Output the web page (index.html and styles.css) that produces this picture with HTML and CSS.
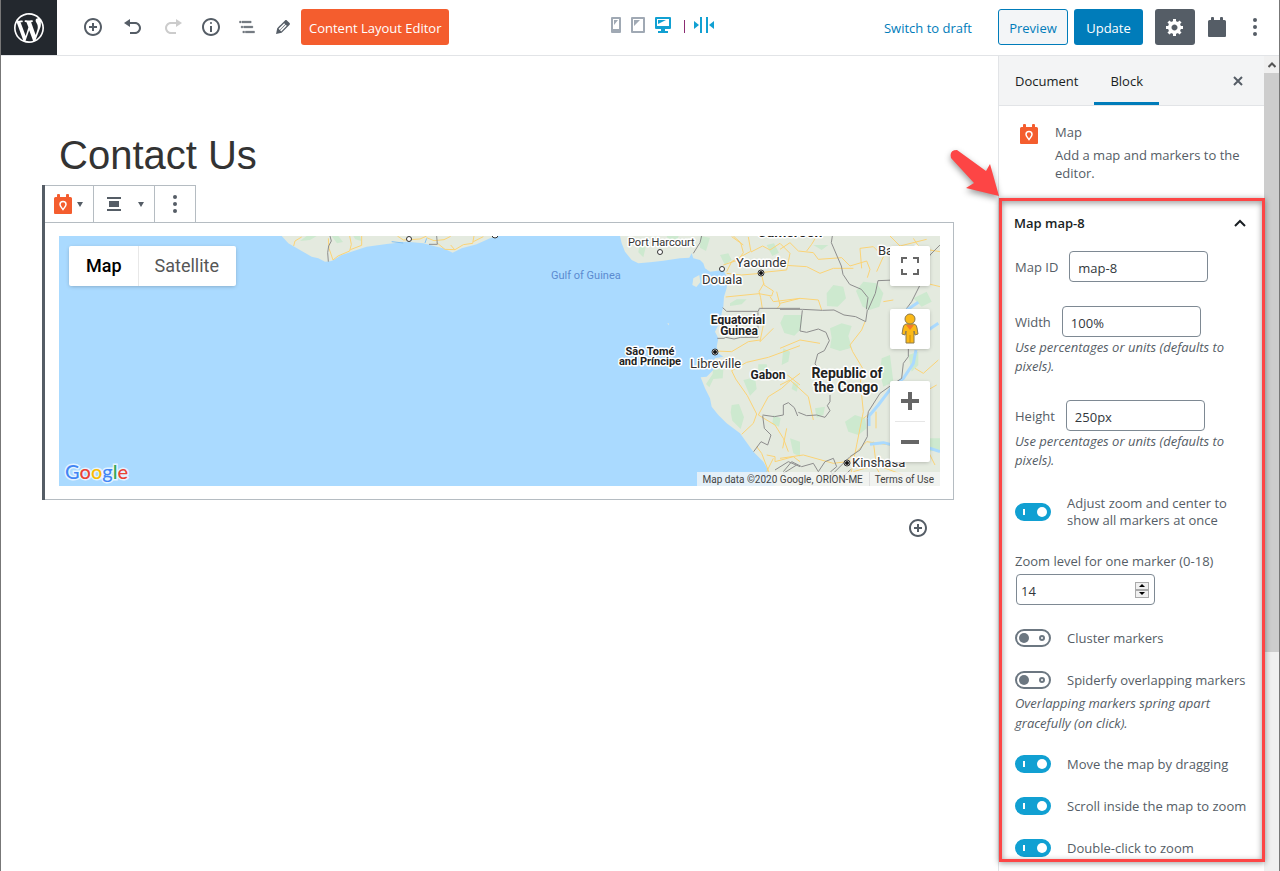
FILE: index.html
```html
<!DOCTYPE html>
<html lang="en">
<head>
<meta charset="utf-8">
<title>Contact Us – Edit Page</title>
<link rel="stylesheet" href="styles.css">
</head>
<body>
<svg class="sprite" aria-hidden="true">
  <symbol id="block-shape" viewBox="0 0 18 20"><path d="M1.500 3H3V1q0-1 1-1h1q1 0 1 1v2h6V1q0-1 1-1h1q1 0 1 1v2h1.500Q18 3 18 4.500V19q0 1-1 1H1q-1 0-1-1V4.500Q0 3 1.500 3z"/></symbol>
  <symbol id="map-block" viewBox="0 0 18 20"><use href="#block-shape"/><path d="M9 15.500C7.500 13.500 6 12.300 6 10.500a3 3 0 0 1 6 0c0 1.800-1.500 3-3 5z" fill="none" stroke="#fff" stroke-width="1.500"/></symbol>
  <symbol id="insert" viewBox="0 0 20 20"><path d="M10 1c-5 0-9 4-9 9s4 9 9 9 9-4 9-9-4-9-9-9zm0 16c-3.900 0-7-3.100-7-7s3.100-7 7-7 7 3.100 7 7-3.100 7-7 7zm1-11H9v3H6v2h3v3h2v-3h3V9h-3V6z"/></symbol>
  <symbol id="dots" viewBox="0 0 20 20"><circle cx="10" cy="3" r="2"/><circle cx="10" cy="10" r="2"/><circle cx="10" cy="17" r="2"/></symbol>
</svg>
<div class="app">
  <header class="topbar">
    <a class="wp-logo" href="#" aria-label="View pages"><svg width="30" height="30" viewBox="0 0 20 20"><path d="M20 10c0-5.510-4.490-10-10-10C4.480 0 0 4.490 0 10c0 5.520 4.480 10 10 10 5.510 0 10-4.480 10-10zM7.780 15.370L4.370 6.220c.55-.02 1.170-.08 1.170-.08.5-.06.44-1.130-.06-1.110 0 0-1.450.11-2.370.11-.18 0-.37 0-.58-.01C4.120 2.690 6.870 1.110 10 1.110c2.330 0 4.450.87 6.050 2.340-.68-.11-1.650.39-1.650 1.580 0 .74.45 1.360.9 2.100.35.61.55 1.360.55 2.460 0 1.490-1.400 5-1.400 5l-3.030-8.370c.54-.02.82-.17.82-.17.5-.05.44-1.250-.06-1.220 0 0-1.440.12-2.380.12-.87 0-2.330-.12-2.330-.12-.5-.03-.56 1.200-.06 1.220l.92.08 1.260 3.410zM17.410 10c.24-.64.74-1.870.43-4.250.7 1.290 1.050 2.710 1.050 4.250 0 3.290-1.730 6.240-4.400 7.780.97-2.590 1.940-5.200 2.920-7.780zM6.100 18.090C3.120 16.650 1.110 13.530 1.110 10c0-1.300.23-2.480.72-3.590C3.250 10.300 4.670 14.200 6.100 18.090zm4.030-6.630l2.580 6.980c-.86.29-1.760.45-2.710.45-.79 0-1.570-.11-2.290-.33.81-2.380 1.620-4.740 2.420-7.100z"/></svg></a>
    <div class="tools">
      <button class="tool" aria-label="Add block"><svg width="20" height="20"><use href="#insert"/></svg></button>
      <button class="tool" aria-label="Undo"><svg width="20" height="20" viewBox="0 0 20 20"><path d="M12 5H7V2L1 6l6 4V7h5c2.200 0 4 1.800 4 4s-1.800 4-4 4H7v2h5c3.300 0 6-2.700 6-6s-2.700-6-6-6z"/></svg></button>
      <button class="tool tool-off" aria-label="Redo" disabled><svg width="20" height="20" viewBox="0 0 20 20"><path d="M8 5h5V2l6 4-6 4V7H8c-2.200 0-4 1.800-4 4s1.800 4 4 4h5v2H8c-3.300 0-6-2.700-6-6s2.700-6 6-6z"/></svg></button>
      <button class="tool tool-narrow" aria-label="Content structure"><svg width="20" height="20" viewBox="0 0 20 20"><path d="M9 15h2V9H9v6zm1-10c-.5 0-1 .5-1 1s.5 1 1 1 1-.5 1-1-.5-1-1-1zm0-4c-5 0-9 4-9 9s4 9 9 9 9-4 9-9-4-9-9-9zm0 16c-3.900 0-7-3.100-7-7s3.100-7 7-7 7 3.100 7 7-3.100 7-7 7z"/></svg></button>
      <button class="tool tool-narrow" aria-label="Block navigation"><svg width="20" height="20" viewBox="0 0 24 24"><path d="M5 5H3v2h2V5zm3 8h11v-2H8v2zm9-8H6v2h11V5zM7 11H5v2h2v-2zm0 8h2v-2H7v2zm3-2v2h11v-2H10z" stroke="currentColor" stroke-width=".4"/></svg></button>
      <button class="tool tool-narrow" aria-label="Edit"><svg width="20" height="20" viewBox="0 0 20 20"><path d="M13.890 3.390l2.710 2.720c.46.46.42 1.240.03 1.640l-8.010 8.020-5.560 1.160 1.160-5.580s7.600-7.630 7.990-8.030c.39-.39 1.220-.39 1.680.07zm-2.730 2.790l-5.590 5.610 1.110 1.110 5.540-5.650zm-2.970 8.230l5.580-5.600-1.070-1.080-5.590 5.600z"/></svg></button>
      <button class="btn btn-orange">Content Layout Editor</button>
    </div>
    <div class="devices">
      <button aria-label="Phone"><svg width="10" height="16" viewBox="0 0 10 16"><path fill-rule="evenodd" d="M1 0h8q1 0 1 1v14q0 1-1 1H1q-1 0-1-1V1q0-1 1-1zm1 2v10h6V2zM3 3h4L3 8z" fill="#a0a9b4"/></svg></button>
      <button aria-label="Tablet"><svg width="14" height="16" viewBox="0 0 14 16"><path fill-rule="evenodd" d="M1 0h12q1 0 1 1v14q0 1-1 1H1q-1 0-1-1V1q0-1 1-1zm1 2v12h10V2zM3 3h6L3 9z" fill="#a0a9b4"/></svg></button>
      <button aria-label="Desktop"><svg width="16" height="16" viewBox="0 0 16 16"><path fill-rule="evenodd" d="M1 0h14q1 0 1 1v10q0 1-1 1H10v2h3v2H3v-2h3v-2H1q-1 0-1-1V1q0-1 1-1zm1 2v7h12V2zM3 3h8L3 7z" fill="#11a0d2"/></svg></button>
      <span class="device-rule"></span>
      <button aria-label="Fit width"><svg width="20" height="16" viewBox="0 0 20 16"><path d="M0 4l5 4-5 4zM20 4l-5 4 5 4zM6 0h2v16H6zM12 0h2v16h-2z" fill="#11a0d2"/></svg></button>
    </div>
    <div class="actions">
      <button class="link">Switch to draft</button>
      <button class="btn btn-preview">Preview</button>
      <button class="btn btn-primary">Update</button>
      <button class="btn btn-gear" aria-label="Settings"><svg width="20" height="20" viewBox="0 0 20 20"><path d="M18 12h-2.180c-.17.7-.44 1.350-.81 1.930l1.540 1.540-2.100 2.100-1.540-1.540c-.58.36-1.230.63-1.910.79V19H8v-2.180c-.68-.16-1.330-.43-1.910-.79l-1.540 1.540-2.120-2.120 1.540-1.540c-.36-.58-.63-1.230-.79-1.910H1V9.030h2.170c.16-.7.44-1.350.8-1.940L2.430 5.550l2.100-2.100 1.540 1.540c.58-.37 1.240-.64 1.930-.81V2h3v2.180c.68.16 1.330.43 1.910.79l1.540-1.540 2.120 2.120-1.540 1.540c.36.59.64 1.240.8 1.940H18V12zm-8.500 1.500c1.660 0 3-1.340 3-3s-1.340-3-3-3-3 1.340-3 3 1.340 3 3 3z"/></svg></button>
      <button class="tool tool-blocks" aria-label="Blocks"><svg width="18" height="20"><use href="#block-shape"/></svg></button>
      <button class="tool tool-narrow" aria-label="More"><svg width="20" height="20"><use href="#dots"/></svg></button>
    </div>
  </header>

  <div class="workspace">
    <main class="editor">
      <h1>Contact Us</h1>
      <section class="block">
        <div class="block-toolbar">
          <button class="bt-type" aria-label="Change block type"><svg width="18" height="20" class="orange"><use href="#map-block"/></svg><i class="caret"></i></button>
          <button class="bt-align" aria-label="Alignment"><svg width="14" height="14" viewBox="0 0 14 14"><path d="M0 0h14v2H0zM2 4h10v6H2zM0 12h14v2H0z"/></svg><i class="caret"></i></button>
          <button class="bt-more" aria-label="More options"><svg width="20" height="20"><use href="#dots"/></svg></button>
        </div>
        <div class="block-body">
          <div class="map">
            <svg class="map-canvas" viewBox="0 0 881 250" preserveAspectRatio="xMaxYMid slice" role="img" aria-label="Map of the Gulf of Guinea">
              <rect width="881" height="250" fill="#aadaff"/>
              <g transform="translate(201 -11) scale(.33333)" fill="none" stroke-width="3">
                <path fill="#e4eadf" d="M65 33l20 22 40 23 30 17 20 5 20 10 20-2 30-18 45-15 30-10 60-8 60-7 50 5 40 10 20 5 28 13 27-13 45-12 40-18 25-7z"/>
                <path fill="#cde9cf" d="M120 48l20-15h30l-20 12zM215 33h20l14 18-18 4zM280 33h20l4 15-18-5z"/>
                <path stroke="#fbd375" d="M125 36l-20 12-4 15M205 40l2 30 12 35 15-12 35-15 5-20-5-25M305 33v28l-34 13M412 33l18 12 50-3 20-9M500 38l22 9 30-3 20-10M530 53l25 20 30 1 25-15 28-4 4-22M640 50l30-15M572 60l12 14"/>
                <path stroke="#8d8d8d" d="M210 33l4 15-8 15-3 20 2 27M530 33l2 25h-25"/>
                <path stroke="#7fc0f5" d="M395 50l35 4M500 40l-5 14"/>
              </g>
              <g transform="translate(541 -11) scale(.33333)" fill="none" stroke-width="3" stroke-linejoin="round">
                <path fill="#e4eadf" d="M60 33l5 22 10 25 20 25 20 10 35-3 40-5 50-7 28-2 7-13 5 15 20 5 10 10 5 15 15 10 40-5 12 25-2 30-8 25-2 30-5 20-5 25-15 30 10 20-5 25 5 20 15 10-25 5-5 20 5 10-25 25-18 2 13 33 15 30 5 25 20 25 25 25 40 30 40 55 30 30 20 35 15 38h495V33zM280 160l18-10 3 22-12 14-12-6zM202 294l6 2-3 5z"/>
                <g fill="#cde9cf">
                  <path d="M118 60l20 2-8 35-15-15zM200 33h36l-10 28-17-8zM300 33l30 5-12 40-18-10zM360 90l25-5 10 20-20 15zM390 235l20-12h30l-15 15-35 5zM500 60l22-5 15 28-20 10zM552 270h55l-4 42-20 20-30-8-12-30zM475 418h25l4 25-30 2zM430 465l35-8 5 35-20 20zM395 540l22-3 15 40-10 35-25-25-5-25zM340 420l30 15-2 25-28 2-12 25-10-10 20-30zM520 570l22 10-5 25-20-8zM570 640l30 10v45l-20-10zM640 60h45l-20 15z"/>
                  <path d="M680 205l20-25 30 5 8 35-25 25-32-2zM768 198l22-28 40 5 20 30-12 40-30 10-20-10zM690 310l35-15 30 8-10 30 10 35-35 10-30-10 5-30zM735 590l30-20 30 10 5 30-25 20-30-10zM645 550l30-5-5 25-20 8zM845 400l25-10 10 80-30 15-10-40zM925 390l30-10v40l-20 20zM550 370l20 10-5 30-20 10zM960 640h60v35l-40 5zM940 220l40-20 15 30-30 15zM580 470l15 10-5 20-15-8z"/>
                </g>
                <g stroke="#fbd375">
                  <path d="M400 33l22 20 8 30-15 22-45 15M445 36l8 45 35-18 22 12 30-20 30 30-10 50-80 8M450 80l-55 30-15 30M430 60l-35-25M484 145l-60 5-44-5M484 145l8 35 28 18-5 15-38-7-100 10M492 175l-15 25 5 18 5 33M520 230l-10-15M520 230l80-10M530 200l10 40-10 12M480 345l-35 5-50 30-50-2M490 300l-10 50 40-40M440 412l65-15 95-35M440 412l-45 25 12 25 35 50 28 55-10 28-35 33M475 570l30-55 40-25 22-20 33-25M475 570l50 30 25 40 15 40M500 690l25 5v15l55-15 20 15M500 740l20-40M470 665l15 20 25 65M600 480l-38-30"/>
                  <path d="M540 73l30-20 25 25 45 5 15 20 70-5 25 25 50-15 10 25-8 25M540 120l80 5 40 20 40-15 60 0M650 33l-15 25-15 20M780 70l40-5 30 30-20 45M780 70l5 60M540 235l60-15 55 5 10 30M795 290l-10 25-35 45 8 20 30 50-10 60M540 370l60-25 60 10M785 510l5 50-20 100-20 100M790 580l40-30M828 560v50M540 480l30-15 55 50 15 70M540 700l70-10 90 25 80-10M740 710l60-60 70 10M760 740l70-20 80 30M820 650l10 80 30 50M870 33l30 30 80-20M940 40l20 30 60 10M960 170l60 15M945 430l25 15 45-40M1010 480l-35 20-5 30M985 680l20 40M560 610l-12 60M850 230l30-5"/>
                </g>
                <g stroke="#8d8d8d">
                  <path d="M305 33l-5 20-20 32M368 248l12 11h95l3-9h122M352 340h20l5-3 25 5 20-5h52v-75M525 735l40-25 35 15M550 745l40-25M488 570l35 5 27-5v-30l15-7 18 15 10 25M488 572l5 38 20 20-10 30-20-10-22 30"/>
                  <path d="M540 253h67l60 3 35-1 30 15 35 5 30 15M607 256l-7 62 20 4 35-10 23 10 10 25-15 30-20 10-8 30 20 20 25 8M690 510v20l-8 12 8 15-15 20-25-7-30 2-25-10M697 33l-3 20 30 70 5 25 20 30 35 15 20 25-5 35M804 255l22-50 8-38 50-2M802 255l-5 35M1020 60l-30 30-25 80-30 60-30 40M550 740l25-30 30 15 35-10 15 25 20-30 25-10 10 25-18 15 15 20 25-8 20-18"/>
                </g>
                <path stroke="#aadaff" stroke-width="9" d="M948 375l-8 40-30 45-35 27-40 53-28 33v30M910 262l45-30M955 335l60-40M810 658l40-5 40 10M960 660l60 20"/>
                <path stroke="#8d8d8d" d="M925 370v25l-15 20-5 45-30 20-35 25-35 55-3 20v55l-22 40-30 20-60 60"/>
              </g>
              <g class="pins">
                <circle cx="350" cy="3" r="2.500"/><circle cx="436" cy="-1" r="3"/><circle cx="601" cy="16" r="2.500"/><circle cx="663" cy="33" r="2.500"/>
                <circle cx="702" cy="37" r="3"/><circle cx="656" cy="116" r="3"/><circle cx="788" cy="227" r="3"/>
              </g>
              <g class="capitals"><circle cx="702" cy="37" r="2"/><circle cx="656" cy="116" r="2"/><circle cx="788" cy="227" r="2"/></g>
              <g class="labels">
                <text class="sea" x="492" y="43">Gulf of Guinea</text>
                <text class="city-small" x="569" y="10">Port Harcourt</text>
                <text class="city" x="677" y="31">Yaounde</text>
                <text class="city" x="643" y="48">Douala</text>
                <text class="city" x="631" y="132">Libreville</text>
                <text class="city" x="793" y="231">Kinshasa</text>
                <text class="city" x="819" y="19">Bangui</text>
                <text class="nation-small" x="679" y="88" text-anchor="middle">Equatorial</text>
                <text class="nation-small" x="680" y="99" text-anchor="middle">Guinea</text>
                <text class="nation-tiny" x="591" y="119" text-anchor="middle">São Tomé</text>
                <text class="nation-tiny" x="591" y="129" text-anchor="middle">and Príncipe</text>
                <text class="nation-small" x="709" y="143" text-anchor="middle">Gabon</text>
                <text class="nation" x="731" y="1" text-anchor="middle">Cameroon</text>
                <text class="nation" x="788" y="142" text-anchor="middle">Republic of</text>
                <text class="nation" x="787" y="156" text-anchor="middle">the Congo</text>
              </g>
            </svg>
            <div class="map-types"><button class="on">Map</button><button>Satellite</button></div>
            <a class="google" href="#" aria-label="Google"><svg width="72" height="28" viewBox="0 0 72 28"><text x="2" y="20"><tspan fill="#4285f4">G</tspan><tspan fill="#ea4335">o</tspan><tspan fill="#fbbc05">o</tspan><tspan fill="#4285f4">g</tspan><tspan fill="#34a853">l</tspan><tspan fill="#ea4335">e</tspan></text></svg></a>
            <div class="map-controls">
              <button class="map-btn" aria-label="Fullscreen"><svg width="18" height="18" viewBox="0 0 18 18"><path d="M0 0h6v2H2v4H0zM12 0h6v6h-2V2h-4zM0 12h2v4h4v2H0zM16 12h2v6h-6v-2h4z"/></svg></button>
              <button class="map-btn map-pegman" aria-label="Street View"><svg width="18" height="32" viewBox="0 0 18 32"><path d="M5 11h8q3 1 3 4l1 6-3 1-1-4v12H5V18l-1 4-3-1 1-6q0-3 3-4z" fill="#fbb917" stroke="#8a7a50"/><circle cx="9" cy="6" r="5" fill="#fbb917" stroke="#8a7a50"/><path d="M5 12h8l-4 5z" fill="#f4792b"/><path d="M9 22v8" stroke="#c98a10"/></svg></button>
              <div class="map-zoom">
                <button aria-label="Zoom in"><svg width="18" height="18" viewBox="0 0 18 18"><path d="M7 0h4v7h7v4h-7v7H7v-7H0V7h7z"/></svg></button>
                <button aria-label="Zoom out"><svg width="18" height="18" viewBox="0 0 18 18"><path d="M0 7h18v4H0z"/></svg></button>
              </div>
            </div>
            <div class="map-credit"><span>Map data ©2020 Google, ORION-ME</span><a href="#">Terms of Use</a></div>
          </div>
        </div>
      </section>
      <button class="inserter" aria-label="Add block"><svg width="20" height="20"><use href="#insert"/></svg></button>
    </main>

    <aside class="sidebar">
      <nav class="tabs">
        <button>Document</button><button class="current">Block</button>
        <button class="close" aria-label="Close settings"><svg width="10" height="10" viewBox="0 0 10 10"><path d="M1 1l8 8M9 1L1 9" stroke="#555d66" stroke-width="2"/></svg></button>
      </nav>
      <div class="card">
        <svg width="18" height="20" class="orange"><use href="#map-block"/></svg>
        <div><h2>Map</h2><p>Add a map and markers to the editor.</p></div>
      </div>
      <section class="panel">
        <svg class="pointer" width="60" height="60" viewBox="0 0 60 60" aria-hidden="true"><path d="M11 6L40 27 44 20 53 52 20 44 28 39 5 14Q3 6 11 6z" fill="#fd4545"/></svg>
        <button class="panel-title">Map map-8<svg width="12" height="8" viewBox="0 0 12 8"><path d="M1 7l5-5 5 5" fill="none" stroke="#191e23" stroke-width="2"/></svg></button>
        <div class="fields">
          <div class="field"><div class="inline"><label for="mid">Map ID</label><input id="mid" type="text" value="map-8"></div></div>
          <div class="field"><div class="inline"><label for="mw">Width</label><input id="mw" type="text" value="100%"></div><p class="help">Use percentages or units (defaults to pixels).</p></div>
          <div class="field"><div class="inline"><label for="mh">Height</label><input id="mh" type="text" value="250px"></div><p class="help">Use percentages or units (defaults to pixels).</p></div>
          <div class="field toggle"><input type="checkbox" id="t1" checked><label for="t1">Adjust zoom and center to show all markers at once</label></div>
          <div class="field stacked"><label for="mz">Zoom level for one marker (0-18)</label>
            <div class="number"><input id="mz" type="text" inputmode="numeric" value="14"><span class="spin"><button aria-label="Increase"><i class="up"></i></button><button aria-label="Decrease"><i class="down"></i></button></span></div></div>
          <div class="field toggle"><input type="checkbox" id="t2"><label for="t2">Cluster markers</label></div>
          <div class="field"><div class="toggle"><input type="checkbox" id="t3"><label for="t3">Spiderfy overlapping markers</label></div><p class="help help-loose">Overlapping markers spring apart gracefully (on click).</p></div>
          <div class="field toggle"><input type="checkbox" id="t4" checked><label for="t4">Move the map by dragging</label></div>
          <div class="field toggle"><input type="checkbox" id="t5" checked><label for="t5">Scroll inside the map to zoom</label></div>
          <div class="field toggle"><input type="checkbox" id="t6" checked><label for="t6">Double-click to zoom</label></div>
        </div>
        <div class="highlight"></div>
      </section>
    </aside>
    <div class="scrollbar" aria-hidden="true"><div class="scroll-up"><svg width="8" height="6" viewBox="0 0 8 6"><path d="M0.500 5L4 1.500 7.500 5" fill="none" stroke="#555" stroke-width="2"/></svg></div><div class="thumb"></div></div>
  </div>
</div>
</body>
</html>
```
FILE: styles.css
```css
*, *::before, *::after { box-sizing: border-box; }
body { margin: 0; background: #fff; color: #555d66; font: 13px/18px "Open Sans", "Noto Sans", sans-serif; }
button { margin: 0; padding: 0; border: 0; background: none; color: inherit; font: inherit; }
button, a { display: flex; align-items: center; justify-content: center; text-decoration: none; }
h1, h2, p { margin: 0; font-weight: 400; }
svg { display: block; flex: none; fill: currentColor; }
.sprite { position: absolute; width: 0; height: 0; }
.orange { color: #f45d2e; }

.app { display: flex; flex-direction: column; height: 100vh; overflow: hidden; border: solid #777; border-width: 0 1px; }

.topbar { display: flex; align-items: center; flex: none; height: 56px; border-bottom: 1px solid #e2e4e7; padding-right: 6px; }
.wp-logo { width: 56px; height: 55px; background: #23282e; color: #fff; }
.tools, .actions { display: flex; align-items: center; padding-bottom: 1px; }
.tools { margin-left: 16px; }
.tool { width: 40px; height: 36px; }
.tool-narrow { width: 36px; }
.tool-off { color: #ccc; }
.tool-blocks { width: 44px; }
.btn { height: 36px; border-radius: 3px; color: #fff; white-space: nowrap; }
.btn-orange { min-width: 144px; padding: 2px 8px 0; background: #f45d2e; }
.btn-preview { width: 70px; padding-top: 2px; border: 1px solid #007cba; background: #f3f5f7; color: #007cba; margin: 0 6px 0 26px; }
.btn-primary { width: 69px; padding-top: 2px; background: #007cba; margin-right: 12px; }
.btn-gear { width: 40px; background: #555d66; }
.actions .tool-narrow { margin-left: -2px; }
.link { padding-top: 2px; color: #007cba; white-space: nowrap; }
.devices { display: flex; align-items: center; margin: 0 8px 6px auto; }
.devices button + button { margin-left: 10px; }
.device-rule { width: 1px; height: 13px; background: #8b2c72; margin: 3px 9px 0 13px; }
.actions { margin-left: auto; }

.workspace { display: flex; flex: 1; min-height: 0; }
.editor { flex: 1; min-width: 0; padding: 75px 44px 0 41px; }
h1 { padding-left: 17px; font: 40px/48px "Liberation Sans", Arial, sans-serif; color: #333; }
.block { margin-top: 6px; border-left: 3px solid #555d66; }
.block-toolbar { display: inline-flex; height: 37px; border: 1px solid #b5bcc2; border-width: 1px 1px 0 0; vertical-align: top; }
.block-toolbar button + button { border-left: 1px solid #b5bcc2; }
.bt-type { width: 48px; gap: 5px; padding-right: 2px; }
.bt-align { width: 61px; gap: 17px; padding-left: 2px; }
.bt-more { width: 41px; }
.caret { border: 3px solid transparent; border-top: 5px solid #555d66; border-bottom: 0; }
.block-body { border: 1px solid #b5bcc2; border-left: 0; padding: 13px 13px 13px 14px; }
.map { position: relative; height: 250px; overflow: hidden; font-family: Roboto, sans-serif; }
.map-canvas { width: 100%; height: 100%; }
.pins { fill: #fff; stroke: #333; stroke-width: 1; }
.capitals { fill: #111; }
.labels { fill: #333; stroke: #fff; stroke-width: 3px; stroke-linejoin: round; paint-order: stroke; }
.sea { font-size: 11px; fill: #5b8bd0; stroke: none; }
.city { font-size: 13px; }
.city-small { font-size: 11px; }
.nation { font-size: 14px; font-weight: 700; fill: #222; }
.nation-small { font-size: 12px; font-weight: 700; fill: #222; }
.nation-tiny { font-size: 11px; font-weight: 700; fill: #222; }
.map-types { position: absolute; left: 10px; top: 10px; display: flex; height: 40px; border-radius: 2px; background: #fff; box-shadow: 0 1px 4px -1px rgba(0,0,0,.3); font-size: 18px; color: #565656; }
.map-types button { padding: 0 17px 0 16px; }
.map-types .on { padding: 0 16px 0 17px; color: #000; font-weight: 500; }
.map-types button + button { border-left: 1px solid #e8e8e8; }
.google { position: absolute; left: 4px; bottom: -1px; }
.google text { font: 500 20px Lato, sans-serif; stroke: rgba(255,255,255,.7); stroke-width: 3px; paint-order: stroke; }
.map-controls { position: absolute; right: 10px; top: 10px; display: flex; flex-direction: column; color: #666; }
.map-btn, .map-zoom { width: 40px; border-radius: 2px; background: #fff; box-shadow: 0 1px 4px -1px rgba(0,0,0,.3); }
.map-btn { height: 40px; }
.map-pegman { margin: 23px 0 32px; }
.map-zoom { padding: 0 5px; }
.map-zoom button { width: 30px; height: 40px; }
.map-zoom button + button { height: 41px; border-top: 1px solid #e6e6e6; }
.map-credit { position: absolute; right: 0; bottom: 0; display: flex; height: 14px; font-size: 10px; line-height: 16px; color: #444; background: rgba(245,245,245,.75); }
.map-credit span { padding: 0 6px 0 5px; }
.map-credit a { padding: 2px 6px 0 5px; color: inherit; border-left: 1px solid #ddd; }
.inserter { margin: 18px 26px 0 auto; }

.sidebar { flex: none; width: 266px; border-left: 1px solid #e2e4e7; }
.tabs { display: flex; height: 50px; background: #f3f4f5; border-bottom: 1px solid #e2e4e7; color: #191e23; }
.tabs button { min-width: 62px; padding: 3px 16px 0; border-bottom: 3px solid transparent; }
.tabs .current { border-color: #007cba; font-weight: 500; }
.tabs .close { min-width: 36px; padding: 4px 0 0; margin: 0 8px 0 auto; }
.card { display: flex; gap: 17px; height: 92px; padding: 18px 16px 0 21px; }
.card h2 { font-size: 13px; line-height: 18px; margin-bottom: 5px; }
.card div { margin-top: -1px; }
.panel { position: relative; }
.panel-title { width: 100%; height: 50px; padding: 0 18px 0 15px; justify-content: space-between; color: #191e23; font-weight: 600; }
.fields { padding: 3px 16px 5px; display: flex; flex-direction: column; gap: 24px; }
.inline { display: flex; align-items: center; gap: 11px; }
.fields input[type="text"] { width: 139px; height: 31px; padding: 2px 8px 0; border: 1px solid #7e8993; border-radius: 4px; background: #fff; color: #32373c; font: inherit; }
.help { margin-top: 1px; font-style: italic; line-height: 19px; }
.help-loose { margin: 4px 0 -2px; line-height: 20px; }
.toggle { display: flex; align-items: center; gap: 16px; line-height: 17px; }
.toggle input { appearance: none; position: relative; flex: none; width: 36px; height: 18px; margin: 0; border: 2px solid #6c7781; border-radius: 9px; background: #fff; }
.toggle input::before { content: ""; position: absolute; left: 2px; top: 2px; width: 10px; height: 10px; border-radius: 5px; background: #6c7781; }
.toggle input::after { content: ""; position: absolute; right: 4px; top: 4px; width: 6px; height: 6px; border: 2px solid #6c7781; border-radius: 3px; }
.toggle input:checked { background: #11a0d2; border-color: #11a0d2; }
.toggle input:checked::before { left: 20px; background: #fff; }
.toggle input:checked::after { right: auto; left: 6px; width: 2px; border: 0; border-radius: 0; background: #fff; }
.toggle label { padding-top: 1px; }
.stacked { display: flex; flex-direction: column; gap: 4px; margin-top: -1px; }
.number { display: flex; align-items: center; margin-left: 1px; width: 139px; height: 31px; border: 1px solid #7e8993; border-radius: 4px; padding-right: 5px; }
.fields .number input { flex: 1; width: 0; border: 0; height: 29px; padding: 2px 4px 0; background: none; }
.spin { display: flex; flex-direction: column; }
.spin button { width: 14px; height: 8px; background: #f0f0f0; border: 1px solid #aaa; }
.up, .down { border: 3px solid transparent; }
.up { border-top: 0; border-bottom-color: #000; }
.down { border-bottom: 0; border-top-color: #000; }
.highlight { position: absolute; inset: 0 -1px 0 0; border: 3px solid #fd4545; box-shadow: 0 1px 6px rgba(0,0,0,.4), inset 0 2px 6px rgba(0,0,0,.4); pointer-events: none; z-index: 2; }
.pointer { position: absolute; left: -53px; top: -54px; z-index: 3; filter: drop-shadow(0 3px 3px rgba(0,0,0,.4)); }
.scrollbar { flex: none; width: 15px; background: #f0f0f0; }
.scroll-up { display: flex; align-items: center; justify-content: center; height: 17px; }
.thumb { height: 71%; background: #cdcdcd; }
```
